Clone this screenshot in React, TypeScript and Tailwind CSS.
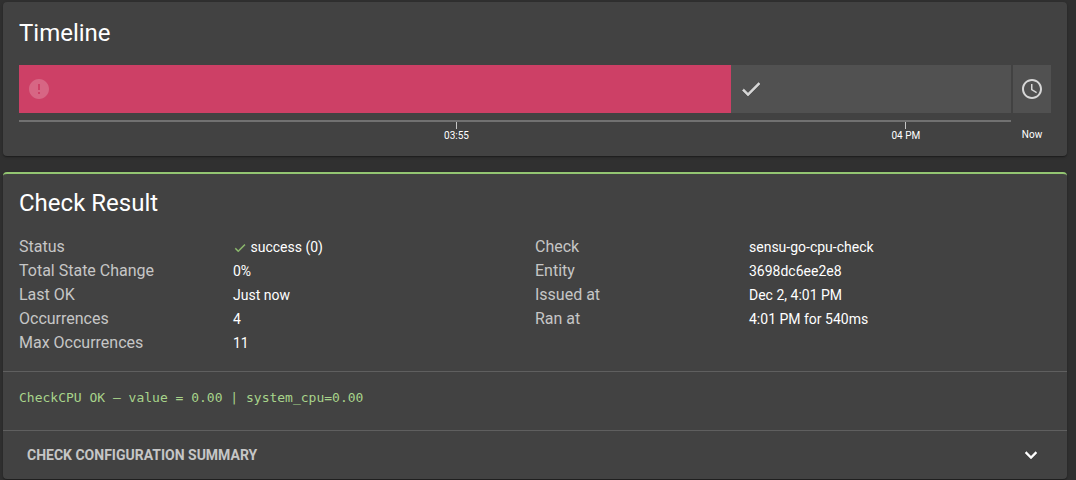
import { useState, type ReactNode } from 'react';
import { MdError, MdSchedule } from 'react-icons/md';
import clsx from 'clsx';

type Segment = { status: 'critical' | 'passing'; share: number };
type Detail = { label: string; value: ReactNode };

function CheckIcon({ className }: { className?: string }) {
  return (
    <svg viewBox="0 0 24 24" fill="currentColor" stroke="currentColor" strokeWidth="0.6" className={className}>
      <path d="M9 16.17 4.83 12l-1.42 1.41L9 19 21 7l-1.41-1.41z" />
    </svg>
  );
}

function ChevronIcon({ className }: { className?: string }) {
  return (
    <svg viewBox="0 0 24 24" fill="currentColor" stroke="currentColor" strokeWidth="0.4" className={className}>
      <path d="M16.59 8.59 12 13.17 7.41 8.59 6 10l6 6 6-6z" />
    </svg>
  );
}

const SEGMENTS: Segment[] = [
  { status: 'critical', share: 71.8 },
  { status: 'passing', share: 28.2 },
];

// offsets are percentages of the axis, measured from the previous tick
const TICKS = [
  { label: '03:55', offset: 44.1 },
  { label: '04 PM', offset: 45.3 },
];

const RESULT: Detail[] = [
  {
    label: 'Status',
    value: (
      <>
        <CheckIcon className="inline w-3.5 h-3.5 text-[#93c572]" /> success (0)
      </>
    ),
  },
  { label: 'Total State Change', value: '0%' },
  { label: 'Last OK', value: 'Just now' },
  { label: 'Occurrences', value: '4' },
  { label: 'Max Occurrences', value: '11' },
];

const SOURCE: Detail[] = [
  { label: 'Check', value: 'sensu-go-cpu-check' },
  { label: 'Entity', value: '3698dc6ee2e8' },
  { label: 'Issued at', value: 'Dec 2, 4:01 PM' },
  { label: 'Ran at', value: '4:01 PM for 540ms' },
];

const cardShadow = 'shadow-[0_1px_3px_rgba(0,0,0,0.2),0_1px_1px_rgba(0,0,0,0.14),0_2px_1px_-1px_rgba(0,0,0,0.12)]';

function DetailList({ items }: { items: Detail[] }) {
  return (
    <dl className="flex-1">
      {items.map(({ label, value }) => (
        <div key={label} className="flex">
          <dt className="w-[214px] flex-shrink-0 text-base leading-6 text-[#c6c6c6]">{label}</dt>
          <dd className="text-sm leading-6">{value}</dd>
        </div>
      ))}
    </dl>
  );
}

function Timeline() {
  return (
    <section className={clsx('rounded-sm bg-[#424242] px-4 pt-[15px] pb-3.5', cardShadow)}>
      <h2 className="text-2xl leading-8 mb-4">Timeline</h2>
      <div className="flex gap-0.5">
        <div className="flex-1">
          <div className="flex h-12">
            {SEGMENTS.map(({ status, share }) => (
              <div
                key={status}
                style={{ width: `${share}%` }}
                className={clsx(
                  'flex items-center px-2',
                  status === 'critical' ? 'bg-[#cd4066] text-white/20' : 'bg-[#515151] text-[#d7d7d7]'
                )}
              >
                {status === 'critical' ? <MdError className="w-6 h-6" /> : <CheckIcon className="w-6 h-6" />}
              </div>
            ))}
          </div>
          {/* Axis */}
          <ol className="mt-[7px] flex border-t-2 border-[#717171]">
            {TICKS.map(({ label, offset }) => (
              <li
                key={label}
                style={{ marginLeft: `${offset}%` }}
                className="w-0 flex flex-col items-center whitespace-nowrap text-[10px] leading-3"
              >
                <span className="w-px h-[7px] mb-px bg-[#c6c6c6]" />
                {label}
              </li>
            ))}
          </ol>
        </div>
        <div className="w-[38px] text-center text-[10px] leading-3">
          <button
            type="button"
            aria-label="Jump to now"
            className="flex w-full h-12 mb-4 items-center justify-center bg-[#515151] text-[#d7d7d7]"
          >
            <MdSchedule className="w-6 h-6" />
          </button>
          Now
        </div>
      </div>
    </section>
  );
}

function CheckResult() {
  const [open, setOpen] = useState(false);

  return (
    <section className={clsx('rounded-sm border-t-2 border-[#93c572] bg-[#424242]', cardShadow)}>
      <div className="px-4 pt-[13px] pb-4">
        <h2 className="text-2xl leading-8 mb-4">Check Result</h2>
        <div className="flex">
          <DetailList items={RESULT} />
          <DetailList items={SOURCE} />
        </div>
      </div>
      <pre className="border-t border-[#5f5f5f] px-4 pt-4 pb-[22px] font-['DejaVu_Sans_Mono',monospace] text-[13px] leading-5 text-[#a8d48b]">
        CheckCPU OK – value = 0.00 | system_cpu=0.00
      </pre>
      <button
        type="button"
        aria-expanded={open}
        onClick={() => setOpen(!open)}
        className="flex w-full h-[49px] items-center justify-between border-t border-[#5f5f5f] px-6 text-sm font-bold text-[#c6c6c6]"
      >
        CHECK CONFIGURATION SUMMARY
        <ChevronIcon className={clsx('w-6 h-6 text-white', open && 'rotate-180')} />
      </button>
    </section>
  );
}

export default function App() {
  return (
    <main className="min-h-screen flex flex-col gap-4 bg-[#303030] pt-0.5 pl-[3px] pr-[9px] font-[Roboto,sans-serif] text-white">
      <Timeline />
      <CheckResult />
    </main>
  );
}
